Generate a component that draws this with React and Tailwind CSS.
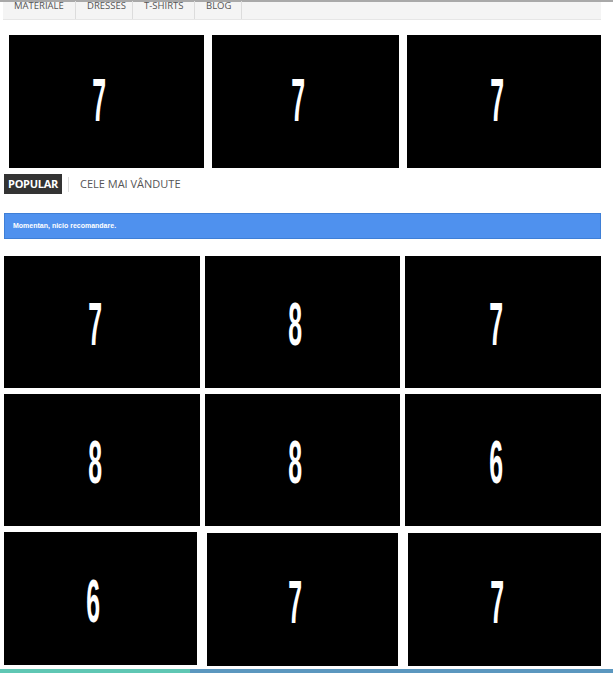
import React from 'react';

const tabs = [
  { t: 'MATERIALE', w: 'w-[73px]' },
  { t: 'DRESSES', w: 'w-[57px]' },
  { t: 'T-SHIRTS', w: 'w-[62px]' },
  { t: 'BLOG', w: 'w-[47px]' },
];

// one black thumbnail with the big condensed number
const Thumb = ({ n, className, top }) => (
  <div className={`bg-black flex items-center justify-center shrink-0 ${className}`}>
    <span
      className={`text-white text-[62px] leading-none font-bold scale-x-[0.4] -translate-x-[7px] ${
        top ? '-translate-y-[2px]' : 'translate-y-[2px]'
      } font-['Liberation_Sans',Arial,sans-serif] select-none`}
    >
      {n}
    </span>
  </div>
);

const App = () => {
  return (
    <div className="relative w-[613px] h-[673px] bg-white overflow-hidden font-['Open_Sans',sans-serif]">
      {/* top line + menu */}
      <div className="h-[2px] bg-[#a9a9a9]" />
      <div className="ml-[3px] w-[598px] h-[18px] bg-[#f4f4f4] border-b border-[#e6e6e6] flex">
        {tabs.map(({ t, w }) => (
          <div key={t} className={`${w} pl-[11px] border-r border-[#dcdcdc] text-[9.5px] leading-[10px] text-[#555] -mt-[1px] whitespace-nowrap`}>
            {t}
          </div>
        ))}
      </div>

      {/* slider row */}
      <div className="flex gap-[8px] pl-[9px] mt-[15px]">
        <Thumb top n="7" className="w-[195px] h-[133px]" />
        <Thumb top n="7" className="w-[187px] h-[133px]" />
        <Thumb top n="7" className="w-[194px] h-[133px]" />
      </div>

      {/* tabs */}
      <div className="flex items-center pl-[4px] mt-[6px] h-[20px]">
        <div className="bg-[#333] text-white text-[11px] font-bold h-[20px] w-[58px] flex items-center justify-center tracking-[-0.3px]">
          POPULAR
        </div>
        <div className="w-px h-[15px] bg-[#ddd] ml-[6px]" />
        <div className="ml-[11px] text-[11px] text-[#555]">CELE MAI VÂNDUTE</div>
      </div>

      {/* notice */}
      <div className="ml-[4px] mt-[19px] w-[597px] h-[26px] bg-[#4f91ee] border border-[#3f7fd6] flex items-center pl-[8px]">
        <span className="text-white text-[7px] font-bold font-['Liberation_Sans',Arial,sans-serif]">
          Momentan, nicio recomandare.
        </span>
      </div>

      {/* product grid */}
      <div className="flex flex-col gap-[6px] pl-[4px] mt-[17px]">
        <div className="flex gap-[5px]">
          <Thumb n="7" className="w-[196px] h-[132px]" />
          <Thumb n="8" className="w-[195px] h-[132px]" />
          <Thumb n="7" className="w-[196px] h-[132px]" />
        </div>
        <div className="flex gap-[5px]">
          <Thumb n="8" className="w-[196px] h-[132px]" />
          <Thumb n="8" className="w-[195px] h-[132px]" />
          <Thumb n="6" className="w-[196px] h-[132px]" />
        </div>
        <div className="flex items-start">
          <Thumb n="6" className="w-[193px] h-[133px]" />
          <Thumb n="7" className="w-[191px] h-[133px] ml-[10px] mt-[1px]" />
          <Thumb n="7" className="w-[193px] h-[133px] ml-[10px] mt-[1px]" />
        </div>
      </div>

      {/* taskbar strip peeking at the bottom */}
      <div className="absolute left-0 bottom-0 w-full h-[4px] flex">
        <div className="w-[190px] bg-[#5fc7b4]" />
        <div className="flex-1 bg-[#5b97bf]" />
      </div>
    </div>
  );
};

export default App;
